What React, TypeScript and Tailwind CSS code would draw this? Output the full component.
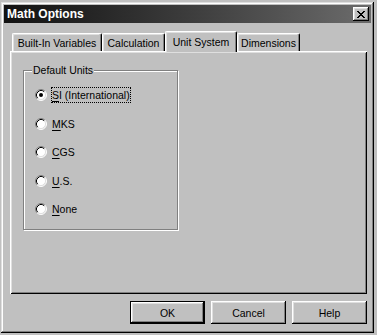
import React from 'react';

const bevelOut =
  'shadow-[inset_-1px_-1px_0_#000,inset_1px_1px_0_#fff,inset_-2px_-2px_0_#808080,inset_2px_2px_0_#dfdfdf]';

const CloseGlyph = () => (
  <svg width="8" height="7" viewBox="0 0 8 7" shapeRendering="crispEdges">
    <path
      fill="#000"
      d="M0 0h2v1H0z M6 0h2v1H6z M1 1h2v1H1z M5 1h2v1H5z M2 2h4v1H2z M3 3h2v1H3z M2 4h4v1H2z M1 5h2v1H1z M5 5h2v1H5z M0 6h2v1H0z M6 6h2v1H6z"
    />
  </svg>
);

const Radio: React.FC<{ checked?: boolean }> = ({ checked }) => (
  <svg width="12" height="12" viewBox="0 0 12 12" className="shrink-0">
    <circle cx="6" cy="6" r="5" fill="#fff" />
    <path d="M2.11 9.89 A5.5 5.5 0 0 1 9.89 2.11" fill="none" stroke="#808080" strokeWidth="1" />
    <path d="M2.82 9.18 A4.5 4.5 0 0 1 9.18 2.82" fill="none" stroke="#000" strokeWidth="1" />
    <path d="M9.89 2.11 A5.5 5.5 0 0 1 2.11 9.89" fill="none" stroke="#fff" strokeWidth="1" />
    <path d="M9.18 2.82 A4.5 4.5 0 0 1 2.82 9.18" fill="none" stroke="#dfdfdf" strokeWidth="1" />
    {checked && <circle cx="6" cy="6" r="2" fill="#000" />}
  </svg>
);

const units = [
  { key: 'S', rest: 'I (International)', checked: true },
  { key: 'M', rest: 'KS' },
  { key: 'C', rest: 'GS' },
  { key: 'U', rest: '.S.' },
  { key: 'N', rest: 'one' },
];

const tabs = [
  { label: 'Built-In Variables', w: 'w-[90px]' },
  { label: 'Calculation', w: 'w-[63px]' },
  { label: 'Unit System', w: 'w-[72px]', active: true },
  { label: 'Dimensions', w: 'w-[63px]' },
];

export default function App() {
  return (
    <div
      className="w-[377px] h-[335px] bg-[#c0c0c0] pt-[2px] pl-[1px] text-black text-[10.5px] leading-[12px]"
      style={{ fontFamily: '"Liberation Sans", Arial, sans-serif' }}
    >
      <div className="w-[373px] h-[331px] p-[3px] bg-[#c0c0c0] shadow-[inset_-1px_-1px_0_#000,inset_1px_1px_0_#dfdfdf,inset_-2px_-2px_0_#808080,inset_2px_2px_0_#fff] flex flex-col">
        {/* Title bar */}
        <div className="h-[18px] flex items-center justify-between pl-[3px] pr-[2px] bg-gradient-to-r from-[#121212] to-[#6c6c6c]">
          <span className="text-white font-bold text-[12px] leading-[14px]">Math Options</span>
          <div className={`w-[16px] h-[14px] bg-[#c0c0c0] flex items-center justify-center ${bevelOut}`}>
            <CloseGlyph />
          </div>
        </div>

        <div className="pl-[6px] pt-[8px]">
          {/* Tabs */}
          <div className="h-[20px] flex items-end pl-[2px]">
            {tabs.map((t) =>
              t.active ? (
                <div
                  key={t.label}
                  className={`${t.w} h-[21px] -mb-[1px] relative z-10 bg-[#c0c0c0] border-l border-t border-r border-l-white border-t-white border-r-black rounded-t-[2px] shadow-[inset_-1px_0_0_#808080,inset_1px_1px_0_#dfdfdf] flex justify-center pt-[4px]`}
                >
                  {t.label}
                </div>
              ) : (
                <div
                  key={t.label}
                  className={`${t.w} h-[18px] bg-[#c0c0c0] border-l border-t border-r border-l-white border-t-white border-r-black rounded-t-[2px] shadow-[inset_-1px_0_0_#808080,inset_1px_1px_0_#dfdfdf] flex justify-center pt-[3px]`}
                >
                  {t.label}
                </div>
              )
            )}
          </div>

          {/* Panel */}
          <div className="w-[357px] h-[243px] pl-[13px] pt-[19px] shadow-[inset_1px_1px_0_#fff,inset_-1px_-1px_0_#000,inset_2px_2px_0_#dfdfdf,inset_-2px_-2px_0_#808080]">
            <div className="relative w-[155px] h-[160px] border border-[#808080] shadow-[inset_1px_1px_0_#fff,1px_1px_0_#fff] pl-[11px] pt-[18px]">
              <span className="absolute left-[8px] -top-[7px] px-[1px] bg-[#c0c0c0]">Default Units</span>
              <div className="flex flex-col gap-[16.5px]">
                {units.map((u) => (
                  <div key={u.key} className="h-[12px] flex items-center">
                    <Radio checked={u.checked} />
                    <span
                      className={`ml-[4px] px-[0px] py-[1px] border border-dotted ${
                        u.checked ? 'border-black' : 'border-transparent'
                      }`}
                    >
                      <span className="underline underline-offset-[2px]">{u.key}</span>
                      {u.rest}
                    </span>
                  </div>
                ))}
              </div>
            </div>
          </div>

          {/* Buttons */}
          <div className="w-[357px] mt-[7px] flex justify-end gap-[6px]">
            <div className={`w-[75px] h-[23px] border border-black flex items-center justify-center shadow-[inset_-1px_-1px_0_#000,inset_1px_1px_0_#fff,inset_-2px_-2px_0_#808080,inset_2px_2px_0_#dfdfdf]`}>
              OK
            </div>
            <div className={`w-[75px] h-[23px] flex items-center justify-center ${bevelOut}`}>Cancel</div>
            <div className={`w-[75px] h-[23px] flex items-center justify-center ${bevelOut}`}>Help</div>
          </div>
        </div>
      </div>
    </div>
  );
}
